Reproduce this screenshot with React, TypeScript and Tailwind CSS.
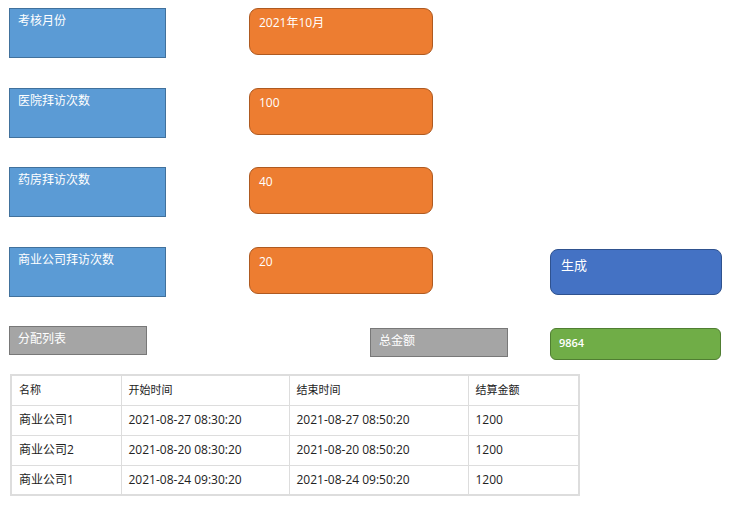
const font = { fontFamily: '"Open Sans", "Noto Sans CJK SC", sans-serif' };

const rows = [
  { label: "考核月份", value: "2021年10月", mt: "mt-2" },
  { label: "医院拜访次数", value: "100", mt: "mt-[30px]" },
  { label: "药房拜访次数", value: "40", mt: "mt-[29px]" },
  { label: "商业公司拜访次数", value: "20", mt: "mt-[30px]" },
];

const data = [
  ["商业公司1", "2021-08-27 08:30:20", "2021-08-27 08:50:20", "1200"],
  ["商业公司2", "2021-08-20 08:30:20", "2021-08-20 08:50:20", "1200"],
  ["商业公司1", "2021-08-24 09:30:20", "2021-08-24 09:50:20", "1200"],
];

export default function App() {
  return (
    <div className="w-[739px] h-[508px] bg-white text-[12px] relative" style={font}>
      {rows.map((r, i) => (
        <div key={i} className={`flex ${r.mt}`}>
          <div className="ml-[9px] w-[157px] h-[50px] bg-[#5b9bd5] border border-[#41719c] text-white px-2 pt-[3px]">
            {r.label}
          </div>
          <div className="ml-[83px] w-[184px] h-[47px] bg-[#ed7d31] border border-[#ae5a21] rounded-[9px] text-white px-[9px] pt-[5px]">
            {r.value}
          </div>
          {i === 3 && (
            <div className="ml-[117px] w-[172px] h-[46px] mt-[2px] bg-[#4472c4] border border-[#2f528f] rounded-[8px] text-white px-[10px] pt-[6px] text-[13px]">
              生成
            </div>
          )}
        </div>
      ))}
      <div className="flex mt-[29px]">
        <div className="ml-[9px] w-[138px] h-[29px] bg-[#a5a5a5] border border-[#787878] text-white px-2 pt-[3px]">
          分配列表
        </div>
        <div className="ml-[223px] mt-[2px] w-[138px] h-[29px] bg-[#a5a5a5] border border-[#787878] text-white px-2 pt-[3px]">
          总金额
        </div>
        <div className="ml-[42px] mt-[2px] w-[171px] h-[32px] bg-[#70ad47] border border-[#507e32] rounded-[6px] text-white px-[8px] pt-[6px] text-[11px] font-semibold">
          9864
        </div>
      </div>
      <table className="ml-[10px] mt-[14px] border-collapse border-2 border-[#dddddd] text-[#222]">
        <tbody>
          {[["名称", "开始时间", "结束时间", "结算金额"], ...data].map((r, i) => (
            <tr key={i} className="h-[30px]">
              {r.map((c, j) => (
                <td
                  key={j}
                  className={`border border-[#dddddd] px-[7px] ${["w-[110px]", "w-[168px]", "w-[179px]", "w-[111px]"][j]} ${i === 0 ? "text-[11px]" : ""}`}
                >
                  {c}
                </td>
              ))}
            </tr>
          ))}
        </tbody>
      </table>
    </div>
  );
}
